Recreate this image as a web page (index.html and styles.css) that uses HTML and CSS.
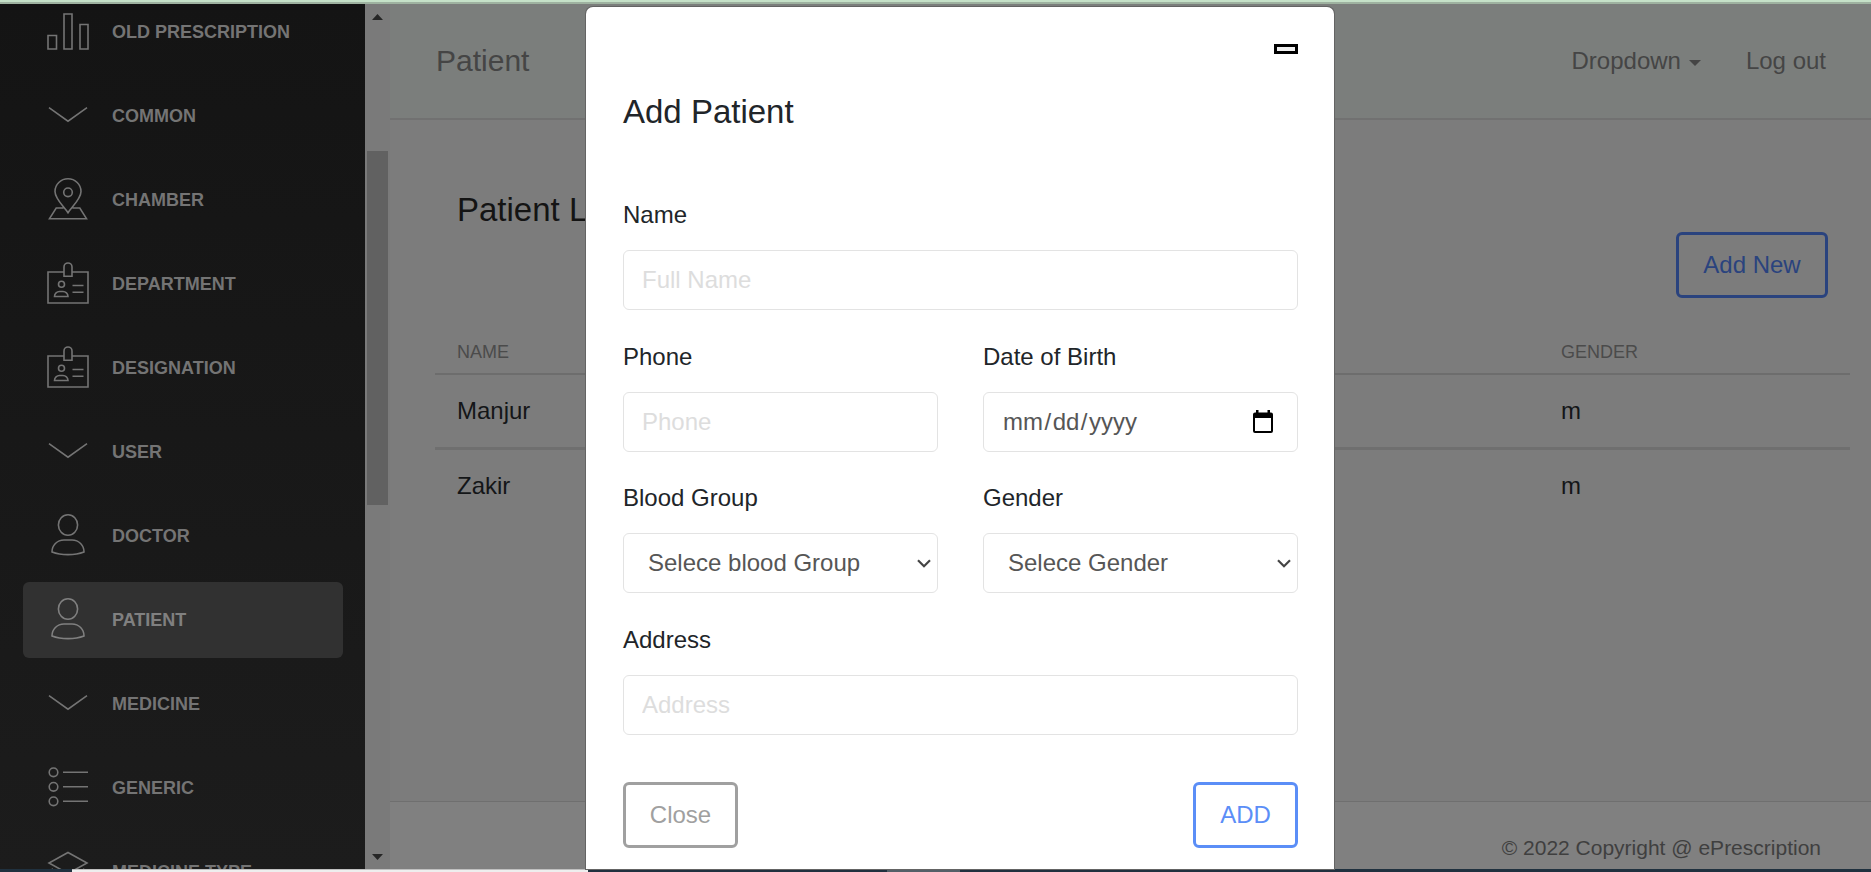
FILE: index.html
```html
<!DOCTYPE html>
<html lang="en">
<head>
<meta charset="utf-8">
<title>Patient</title>
<link rel="stylesheet" href="styles.css">
</head>
<body>
<svg class="defs" width="0" height="0">
  <symbol id="i-bars" viewBox="0 0 42 42"><path d="M1 25.500h8.500v13.500H1zM17 4h8v35h-8zM33 14.500h8V39h-8z"/></symbol>
  <symbol id="i-down" viewBox="0 0 42 42"><path d="M2 13.700 21 27.200 40 13.700"/></symbol>
  <symbol id="i-pin" viewBox="0 0 42 42"><path d="M21 34.700C17 28.500 8 21 8 13.500a13 12.700 0 0 1 26 0c0 7.500-9 15-13 21.200zM16.500 30H9.200L2.500 40.700h37L32.800 30h-7.300"/><circle cx="21" cy="14.300" r="4.300"/></symbol>
  <symbol id="i-card" viewBox="0 0 42 42"><path d="M16.500 10H1v31h40V10H25.500M17 14.200V5a4 4 0 0 1 8 0v9.200zM25.500 23.500h11M25.500 30.200h11M7.500 34.500c0-3 2.500-5 5-5h3.500c2.500 0 5 2 5 5z"/><circle cx="14.500" cy="22.300" r="3"/></symbol>
  <symbol id="i-user" viewBox="0 0 42 42"><ellipse cx="21" cy="11" rx="9.600" ry="10.200"/><path d="M17 26h8c7 0 12 5.500 12 12-9 3.500-23 3.500-32 0 0-6.500 5-12 12-12z"/></symbol>
  <symbol id="i-list" viewBox="0 0 42 42"><circle cx="6.500" cy="6.300" r="4.300"/><circle cx="6.500" cy="20.800" r="4.300"/><circle cx="6.500" cy="35.300" r="4.300"/><path d="M16 6.300h25M16 20.800h25M16 35.300h25"/></symbol>
  <symbol id="i-layers" viewBox="0 0 42 42"><path d="M21 2.500 40 13 21 23.500 2 13zM6 19 2 21l19 10 19-10-4-2"/></symbol>
</svg>
<div class="edge-top"></div>
<div class="app">
  <nav class="sidebar">
    <a class="item"><svg><use href="#i-bars"/></svg><span>OLD PRESCRIPTION</span></a>
    <a class="item"><svg><use href="#i-down"/></svg><span>COMMON</span></a>
    <a class="item"><svg><use href="#i-pin"/></svg><span>CHAMBER</span></a>
    <a class="item"><svg><use href="#i-card"/></svg><span>DEPARTMENT</span></a>
    <a class="item"><svg><use href="#i-card"/></svg><span>DESIGNATION</span></a>
    <a class="item"><svg><use href="#i-down"/></svg><span>USER</span></a>
    <a class="item"><svg><use href="#i-user"/></svg><span>DOCTOR</span></a>
    <a class="item active"><svg><use href="#i-user"/></svg><span>PATIENT</span></a>
    <a class="item"><svg><use href="#i-down"/></svg><span>MEDICINE</span></a>
    <a class="item"><svg><use href="#i-list"/></svg><span>GENERIC</span></a>
    <a class="item"><svg><use href="#i-layers"/></svg><span>MEDICINE TYPE</span></a>
  </nav>
  <div class="scrollbar">
    <svg class="arrow" viewBox="0 0 11 6"><path d="M5.500 0 11 6H0z"/></svg>
    <div class="thumb"></div>
    <svg class="arrow" viewBox="0 0 11 6"><path d="M5.500 6 11 0H0z"/></svg>
  </div>
  <div class="main">
    <header class="topbar">
      <span class="brand">Patient</span>
      <span class="menu">Dropdown<i class="caret"></i></span>
      <span class="menu">Log out</span>
    </header>
    <section class="content">
      <h4 class="heading">Patient List</h4>
      <div class="actions"><button class="btn btn-new">Add New</button></div>
      <div class="table">
        <div class="row head"><span>NAME</span><span>GENDER</span></div>
        <div class="row first"><span>Manjur</span><span>m</span></div>
        <div class="row second"><span>Zakir</span><span>m</span></div>
      </div>
    </section>
    <footer class="footer">© 2022 Copyright @ ePrescription</footer>
  </div>
</div>
<div class="modal">
  <div class="modal-top"><button class="dismiss" aria-label="Close"></button></div>
  <h5 class="modal-title">Add Patient</h5>
  <div class="form">
    <label class="field wide"><span>Name</span><input class="control" placeholder="Full Name"></label>
    <label class="field"><span>Phone</span><input class="control" placeholder="Phone"></label>
    <div class="field"><span>Date of Birth</span>
      <div class="control date"><span>mm<b>/</b>dd<b>/</b>yyyy</span>
        <svg width="20" height="23" viewBox="0 0 20 23"><path fill-rule="evenodd" d="M3 0h2.500v2.500h9V0H17v2.500h1a2 2 0 0 1 2 2V21a2 2 0 0 1-2 2H2a2 2 0 0 1-2-2V4.500a2 2 0 0 1 2-2h1zM2 8v13h16V8z"/></svg>
      </div>
    </div>
    <div class="field"><span>Blood Group</span>
      <div class="control select"><span>Selece blood Group</span><svg width="14" height="9" viewBox="0 0 14 9"><path d="M1 1.200 7 7.200 13 1.200"/></svg></div>
    </div>
    <div class="field"><span>Gender</span>
      <div class="control select"><span>Selece Gender</span><svg width="14" height="9" viewBox="0 0 14 9"><path d="M1 1.200 7 7.200 13 1.200"/></svg></div>
    </div>
    <label class="field wide"><span>Address</span><input class="control" placeholder="Address"></label>
  </div>
  <div class="modal-foot"><button class="btn btn-close">Close</button><button class="btn btn-add">ADD</button></div>
</div>
<div class="edge-bottom"><i class="tab"></i><i class="light"></i><i class="dark"></i><i class="mid"></i></div>
</body>
</html>
```
FILE: styles.css
```css
* { box-sizing: border-box; }
html, body { height: 872px; overflow: hidden; }
body { margin: 0; position: relative; display: flex; flex-direction: column; font: 24px/36px "Liberation Sans", Arial, sans-serif; color: #141618; background: #7c7c7c; }
.defs { position: absolute; }
.edge-top { flex: none; height: 4px; background: #c5e1c8; border-bottom: 2px solid #9eb2a0; }
.app { flex: none; height: 865px; display: flex; overflow: hidden; }

.sidebar { width: 365px; flex: none; padding: 0 22px 0 23px; background: linear-gradient(#141414, #1c1c1c); overflow: hidden; display: flex; flex-direction: column; gap: 8px; }
.item { flex: none; height: 76px; display: flex; align-items: center; padding-left: 24px; gap: 23px; border-radius: 6px; font-size: 18px; font-weight: bold; color: #747474; white-space: nowrap; }
.item:first-child { margin-top: -10px; }
.item svg { width: 42px; height: 42px; flex: none; margin-bottom: 2.600px; overflow: visible; fill: none; stroke: #747474; stroke-width: 1.6; }
.active { background: #313131; color: #808080; }
.active svg { stroke: #808080; }

.scrollbar { width: 25px; flex: none; background: #7a7a7a; display: flex; flex-direction: column; justify-content: space-between; align-items: center; padding: 10px 0 9px; }
.arrow { width: 11px; height: 6px; fill: #262626; }
.thumb { width: 21px; height: 354px; background: #616161; margin-bottom: 219px; }

.main { flex: 1; min-width: 0; display: flex; flex-direction: column; }
.topbar { height: 116px; flex: none; display: flex; align-items: center; padding: 0 45px 0 46px; gap: 45px; background: #7b7e7c; border-bottom: 2px solid #717171; color: #454545; }
.brand { font-size: 30px; margin-right: auto; }
.menu { display: flex; align-items: center; }
.caret { margin: 4px 0 0 8px; border: 6px solid transparent; border-top-color: #454545; border-bottom: 0; }
.content { flex: 1; padding: 70px 21px 0 45px; }
.heading { margin: 0 0 0 22px; font-weight: normal; font-size: 33px; line-height: 40px; color: #141414; }
.actions { display: flex; justify-content: flex-end; padding: 2px 22px 0 0; }
.btn { font: 24px/36px "Liberation Sans", Arial, sans-serif; height: 66px; padding: 0 20px; border: 3px solid; border-radius: 6px; background: transparent; }
.btn-new { color: #2a437e; width: 152px; }
.table { margin-top: 35px; }
.row { display: grid; grid-template-columns: 1104px 1fr; padding-left: 22px; }
.head { height: 42px; padding-top: 1px; font-size: 18px; color: #4b4b4b; border-bottom: 2px solid #6d6d6d; }
.first { height: 75px; align-items: center; border-bottom: 3px solid #6f6f6f; }
.second { height: 72px; align-items: center; }
.footer { flex: none; height: 68px; margin-top: auto; padding: 28px 50px 0 0; text-align: right; font-size: 21px; border-top: 1px solid #6f6f6f; background: #808080; color: #3f3f3f; }

.modal { position: absolute; left: 586px; top: 7px; width: 748px; height: 862px; padding: 0 36px 0 37px; background: #fff; border-radius: 7px 7px 0 0; box-shadow: 0 0 0 1px #646464; color: #212529; display: flex; flex-direction: column; }
.modal-top { height: 83px; display: flex; justify-content: flex-end; padding-top: 37px; }
.dismiss { width: 24px; height: 10px; padding: 0; border: 3px solid #000; background: #efefef; }
.modal-title { margin: 0; font-weight: normal; font-size: 33px; line-height: 44px; }
.form { margin-top: 56px; display: grid; grid-template-columns: 315px 315px; column-gap: 45px; row-gap: 21.500px; }
.field { display: flex; flex-direction: column; height: 120px; padding-top: 7px; gap: 16px; }
.wide { grid-column: span 2; }
.control { height: 60px; width: 100%; flex: none; padding: 0 18px; border: 1px solid #e3e3e3; border-radius: 6px; background: #fff; font: 24px/36px "Liberation Sans", Arial, sans-serif; color: #565656; margin-top: 1px; }
.control::placeholder { color: #dddddd; opacity: 1; }
.date { display: flex; align-items: center; justify-content: space-between; padding: 0 24px 0 19px; }
.date b { font-weight: normal; padding: 0 1.500px; }
.select { display: flex; align-items: center; justify-content: space-between; padding: 0 6px 0 24px; }
.select path { fill: none; stroke: #454545; stroke-width: 2.200; }
.modal-foot { margin-top: 47.500px; display: flex; justify-content: space-between; }
.btn-close { width: 115px; color: #a0a0a0; }
.btn-add { width: 105px; color: #5b8ef7; }

.edge-bottom { flex: none; height: 3px; display: flex; background: #20313f; }
.tab { width: 72px; }
.light { width: 516px; background: #eee; border-top: 1px solid #c0c0c0; }
.dark { width: 299px; }
.mid { width: 73px; background: #536068; }
```
